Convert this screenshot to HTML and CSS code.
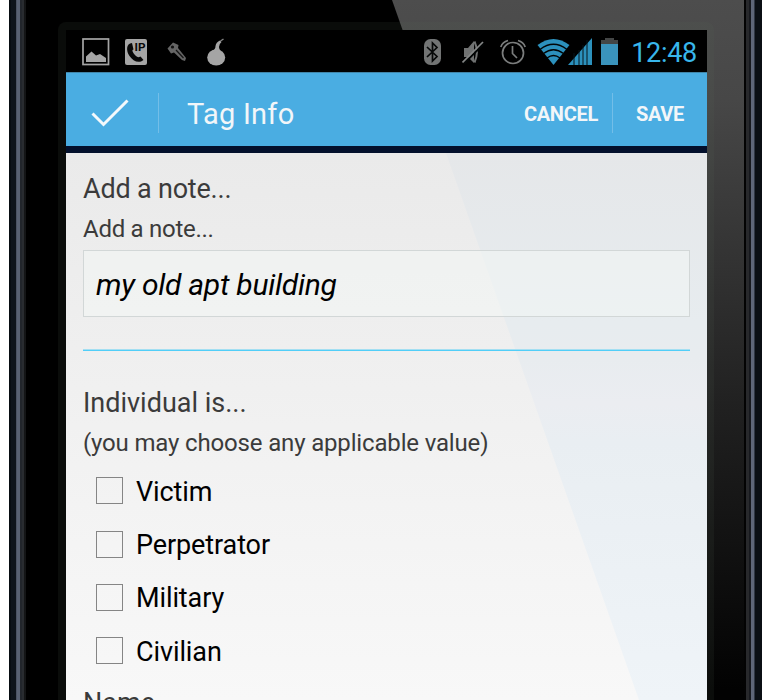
FILE: index.html
```html
<!DOCTYPE html>
<html lang="en">
<head>
<meta charset="utf-8">
<title>Tag Info</title>
<link rel="stylesheet" href="styles.css">
</head>
<body>
<div class="phone">
  <div class="glass">
    <div class="glass-glare"></div>
    <div class="bezel">
      <main class="screen">
        <div class="status">
          <div class="status-group notifications">
            <svg width="28" height="28" viewBox="0 0 28 28"><rect x="1" y="1" width="25.5" height="25.5" fill="none" stroke="#a5a5a5" stroke-width="1.700"/><path d="M4 24V18.500L9.500 13.500L14 17.500L18 16L24 20V24Z" fill="#a5a5a5"/></svg>
            <svg class="call" width="22" height="26" viewBox="0 0 22 26"><rect width="22" height="26" rx="2" fill="#a5a5a5"/><path d="M7 4C1 4.500 1 12 4.500 17C8 22 13.500 25 18.500 21L15.500 17.500C13 19 12 18 10 16C7.500 13 6.500 11 8.500 10.500Z" fill="#080808"/><text x="9.500" y="12" textLength="11" lengthAdjust="spacingAndGlyphs">IP</text></svg>
            <svg class="key" width="20" height="20" viewBox="0 0 20 20"><path d="M0.500 6.500L6 0.500L11.500 3L11 6L19 16L18 19L15 18L7 10.500L4 11.500Z" fill="#656565"/><path d="M9 8L16.500 16" stroke="#151515" stroke-width="1.200"/><circle cx="5.500" cy="5" r="1.600" fill="#111"/></svg>
            <svg class="bomb" width="19" height="28" viewBox="0 0 19 28"><ellipse cx="9.200" cy="19.500" rx="9" ry="8" fill="#a5a5a5"/><path d="M5 13Q8.500 11.500 8.500 8Q9 4 13 2.500L14.500 4Q12 6 12 9Q12 11.500 14 13.500Z" fill="#a5a5a5"/><path d="M13.500 3L16.500 1" stroke="#858585" stroke-width="1.400"/></svg>
          </div>
          <div class="status-group system">
            <svg width="17" height="26" viewBox="0 0 17 26"><rect width="17" height="26" rx="6.500" fill="#727474"/><path d="M3 8L13 17.500L8.500 22V4L13 8.500L3 18" fill="none" stroke="#060808" stroke-width="1.700"/></svg>
            <svg class="mute" width="22" height="24" viewBox="0 0 22 24"><path d="M2 8H6L12 1V23L6 17H2Z" fill="#707272"/><path d="M12.500 1.500C15.500 8 15.500 16 12.500 22.500" fill="none" stroke="#707272" stroke-width="2"/><path d="M1.500 24L22 3.500" stroke="#020505" stroke-width="2"/><path d="M0.500 22.500L21 2" stroke="#858787" stroke-width="1.700"/></svg>
            <svg class="alarm" width="26" height="26" viewBox="0 0 26 26" fill="none" stroke="#7b7d7d" stroke-width="1.700"><circle cx="13" cy="14" r="10.500"/><path d="M12.500 7V14.500L17 19"/><path d="M0.800 8Q2.500 3 8 1.500M18 1.500Q23.500 3 25.200 8"/></svg>
            <svg class="wifi" width="33" height="26" viewBox="0 0 33 26"><path d="M16.500 26L0.500 6Q16.500 -6 32.500 6Z" fill="#2c91bd"/><g fill="none" stroke="#010506" stroke-width="1.300"><path d="M3 10.500Q16.500 0 30 10.500M6.500 14.500Q16.500 7 26.500 14.500M10 19Q16.500 14 23 19"/></g></svg>
            <svg class="signal" width="24" height="27" viewBox="0 0 24 27"><path d="M0 27L24 0V27Z" fill="#2c91bd"/><path d="M6 15V27M11 12V27M15 7V27M19 2V27" stroke="#06151b" stroke-width="1"/></svg>
            <svg class="battery" width="17" height="27" viewBox="0 0 17 27"><path d="M4 0H13V2H17V7H0V2H4Z" fill="#444646"/><path d="M0 6H17V27H0Z" fill="#3a93bc"/></svg>
            <span class="clock">12:48</span>
          </div>
        </div>
        <header class="bar">
          <svg class="check" width="38" height="28" viewBox="0 0 38 28"><path d="M1.500 14.500L12.500 25.500L36.500 1.500" fill="none" stroke="#f4f9fc" stroke-width="3"/></svg>
          <span class="rule"></span>
          <h1>Tag Info</h1>
          <span class="action cancel">CANCEL</span>
          <span class="rule"></span>
          <span class="action save">SAVE</span>
        </header>
        <section class="form">
          <div class="form-glare"></div>
          <div class="fields">
            <h2>Add a note...</h2>
            <p class="hint">Add a note...</p>
            <div class="input">my old apt building</div>
            <div class="divider"></div>
            <h2 class="group-title">Individual is...</h2>
            <p>(you may choose any applicable value)</p>
            <ul>
              <li><i class="box"></i><span>Victim</span></li>
              <li><i class="box"></i><span>Perpetrator</span></li>
              <li><i class="box"></i><span>Military</span></li>
              <li><i class="box"></i><span>Civilian</span></li>
            </ul>
            <h2 class="next">Name</h2>
          </div>
        </section>
      </main>
    </div>
  </div>
</div>
</body>
</html>
```
FILE: styles.css
```css
* { box-sizing: border-box; }
body { margin: 0; height: 700px; overflow: hidden; background: #fff; font-family: Roboto, sans-serif; }
svg { display: block; flex: none; }
h1, h2, p, ul { margin: 0; padding: 0; font-weight: 400; }

.phone {
  width: 753px; height: 700px; margin-left: 9px; padding: 0 18px 0 17px;
  background: linear-gradient(90deg,
    #080d12 0 2px, #0e141b 2px 7px, #4b5363 7px 8px, #596273 8px 11px, #22262c 11px 13px, #292c30 13px 15px, #141516 15px 17px,
    #000 17px 735px, #030303 735px 737px, #28292c 737px 740px, #17191e 740px 742px, #5e6678 742px 745px, #303744 745px 746px, #0b0f14 746px 753px);
}
.glass { position: relative; height: 700px; background: #000; padding: 22px 30px 0 32px; }
.glass-glare {
  position: absolute; inset: 0;
  background: linear-gradient(#4d4d4d 0, #474747 100px, #202020 410px, #020202 690px);
  clip-path: polygon(366px 0, 100% 0, 100% 100%, 613px 100%);
}
.bezel { position: relative; height: 678px; border-radius: 8px 8px 0 0; background: rgba(90, 105, 95, .11); padding: 8px 7px 0 8px; }
.screen { height: 670px; overflow: hidden; background: #020506; }

.status { height: 43px; display: flex; justify-content: space-between; padding: 0 10px 0 16px; background: linear-gradient(#000 0, #000 41.5px, #235673 42px, #5fb4de 43px); }
.status-group { display: flex; align-items: center; }
.notifications { padding-top: 1px; }
.call { margin-left: 15px; }
.call text { font: 700 10px Roboto, sans-serif; fill: #080808; }
.key { margin-left: 20px; }
.bomb { margin-left: 20px; }
.mute { margin-left: 21px; }
.alarm { margin-left: 16px; }
.wifi { margin-left: 11px; }
.signal { margin-left: -2px; }
.battery { margin-left: 9px; }
.clock { margin-left: 13px; font-size: 27px; letter-spacing: -.3px; line-height: 41px; padding-top: 4px; color: #38b6eb; }

.bar { height: 80px; display: flex; align-items: center; background: #4aade2; border-bottom: 7px solid #03102c; color: #f2f6f9; padding-top: 6px; }
.check { margin-left: 25px; }
.rule { width: 1px; height: 40px; background: #73bee8; }
.check + .rule { margin-left: 29px; }
h1 { margin-left: 28px; flex: 1; font-size: 29px; letter-spacing: .25px; line-height: 40px; padding-top: 3px; }
.action { font-size: 20px; font-weight: 700; letter-spacing: -.3px; padding-top: 2px; }
.cancel { margin-right: 14px; }
.save { margin: 0 23px 0 23px; }

.form { position: relative; height: 547px; background: linear-gradient(#eaeaea, #f8f8f8); }
.form-glare {
  position: absolute; inset: 0;
  background: linear-gradient(#e5e7e9, #e7ecef 170px, #e8ecef 205px, #ebedf1 250px, #e9eef2 290px, #eff4f8);
  clip-path: polygon(380px 0, 100% 0, 100% 100%, 573px 100%);
}
.fields { position: relative; padding: 18px 17px 0; color: #3b3b3b; }
h2 { font-size: 27px; letter-spacing: -.2px; line-height: 36px; }
.group-title { letter-spacing: 0; }
p { font-size: 24px; letter-spacing: -.16px; line-height: 28px; padding-top: 8px; height: 44px; }
.hint { letter-spacing: -.27px; }
.input { height: 67px; border: 1px solid #d2d7d7; background: rgba(243, 247, 246, .5); padding-left: 12px; font-size: 30px; letter-spacing: -.26px; line-height: 67px; font-style: italic; color: #000; margin-top: -1px; }
.divider { height: 2px; background: linear-gradient(#a4dff2 0 1px, #51cef8 1px 2px); margin: 32px 0 34px; }
ul { list-style: none; padding-left: 13px; }
li { height: 53.4px; display: flex; align-items: center; gap: 13px; font-size: 27px; letter-spacing: -.1px; color: #000; }
.box { width: 27px; height: 27px; border: 1px solid #858585; margin-top: -2px; }
.next { margin-top: 6px; letter-spacing: 0; }
```
